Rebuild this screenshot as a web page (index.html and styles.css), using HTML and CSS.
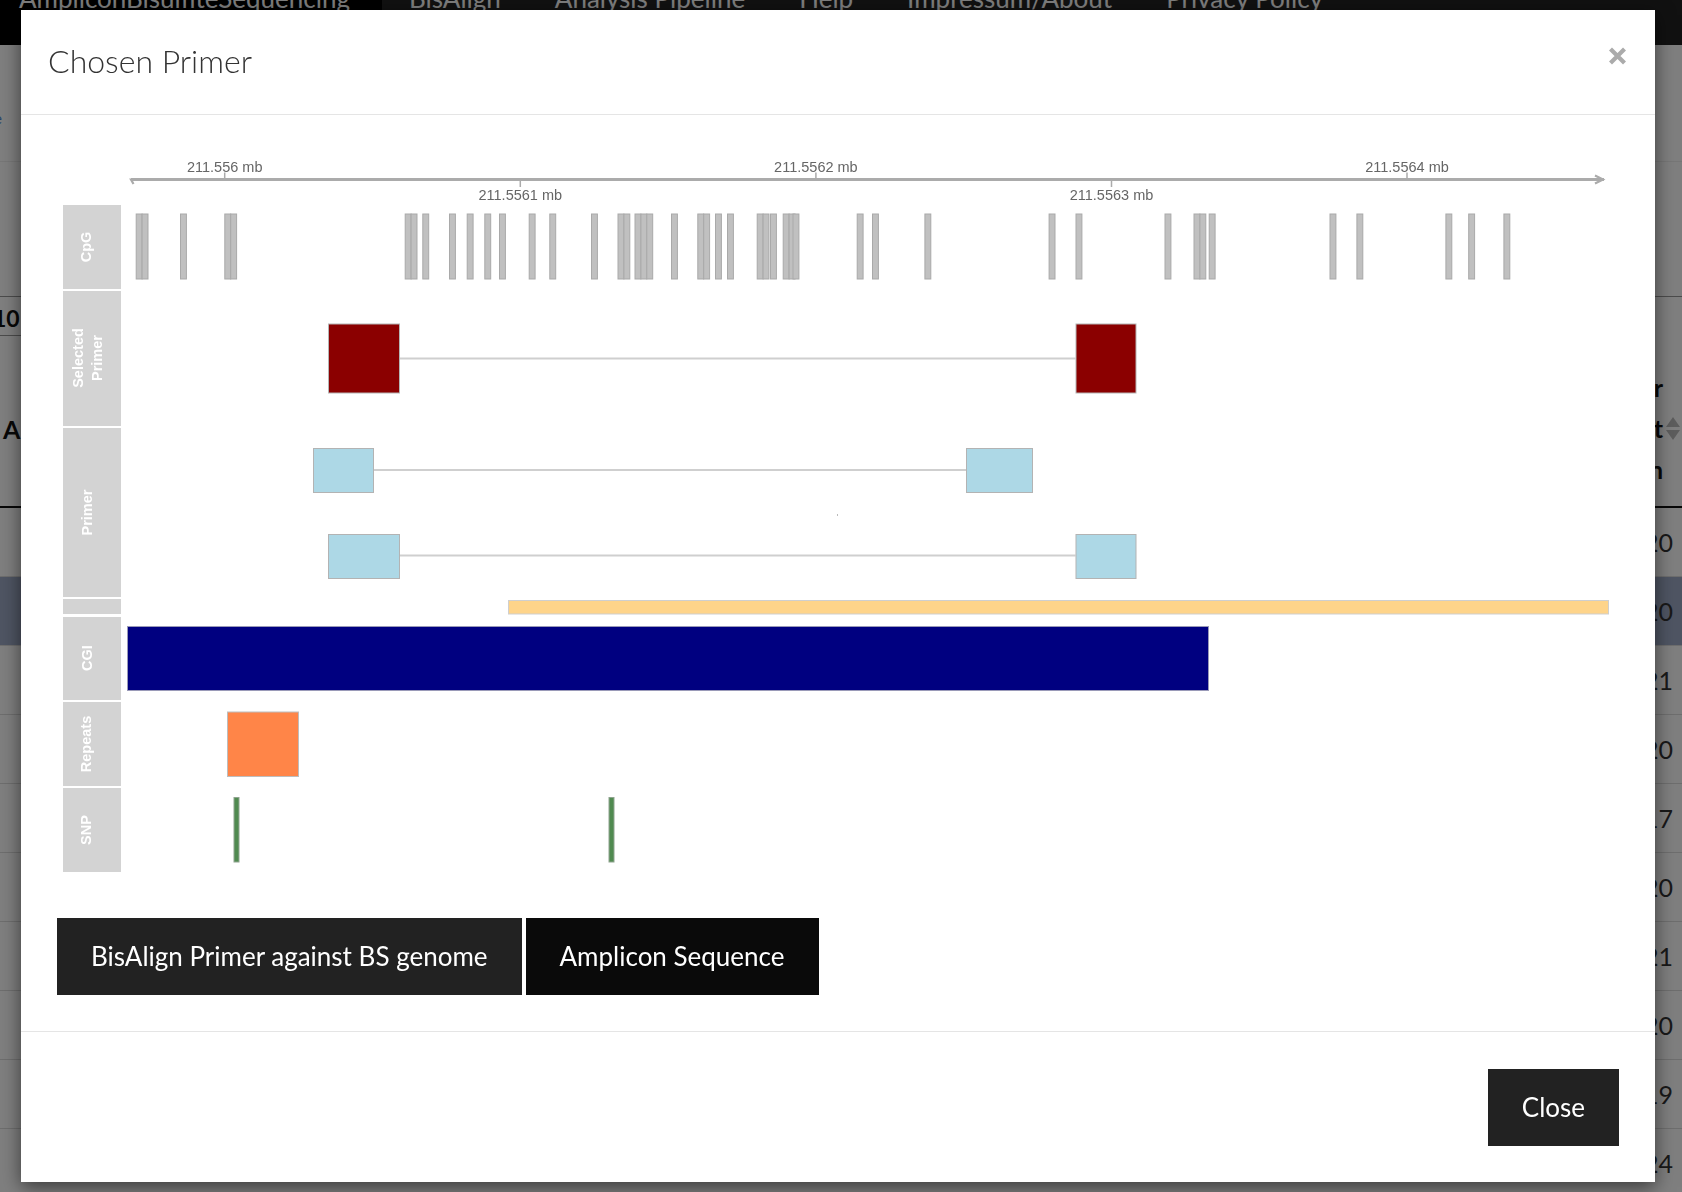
FILE: index.html
```html
<!DOCTYPE html>
<html lang="en">
<head>
<meta charset="utf-8">
<title>Chosen Primer</title>
<link rel="stylesheet" href="styles.css">
</head>
<body>
<div class="page">
  <header class="navbar">
    <div class="brand"><span class="nav-text">AmpliconBisulfiteSequencing</span></div>
    <nav class="nav-links">
      <span class="nav-text nav-item">BisAlign</span>
      <span class="nav-text nav-item">Analysis Pipeline</span>
      <span class="nav-text nav-item">Help</span>
      <span class="nav-text nav-item">Impressum/About</span>
      <span class="nav-text nav-item">Privacy Policy</span>
    </nav>
  </header>
  <main class="content">
    <div class="crumb"><a class="crumb-link">Home</a></div>
    <div class="toolbar"></div>
    <div class="length-row"><span class="length-select">10</span></div>
    <div class="thead">
      <div class="th-left">A</div>
      <div class="th-right">
        <span class="th-line">Primer</span>
        <span class="th-line">Count<span class="sort"><span class="sort-up"></span><span class="sort-down"></span></span></span>
        <span class="th-line">Position</span>
      </div>
    </div>
    <div class="tbody">
      <div class="tr"><span class="td-num">20</span></div>
      <div class="tr tr-active"><span class="td-num">20</span></div>
      <div class="tr"><span class="td-num">21</span></div>
      <div class="tr"><span class="td-num">20</span></div>
      <div class="tr"><span class="td-num">17</span></div>
      <div class="tr"><span class="td-num">20</span></div>
      <div class="tr"><span class="td-num">21</span></div>
      <div class="tr"><span class="td-num">20</span></div>
      <div class="tr"><span class="td-num">19</span></div>
      <div class="tr"><span class="td-num">24</span></div>
    </div>
  </main>
</div>

<div class="backdrop"></div>

<div class="modal">
  <div class="modal-header">
    <h4 class="modal-title">Chosen Primer</h4>
    <svg class="close-x" width="19" height="18" viewBox="0 0 19 18" aria-label="close">
      <path d="M2.5 2 L16.5 16 M16.5 2 L2.5 16" />
    </svg>
  </div>

  <div class="modal-body">
    <svg class="tracks" width="1562" height="790" viewBox="0 0 1562 790">
      <!-- axis -->
      <g class="axis">
        <line class="axis-line" x1="74" y1="64.5" x2="1547" y2="64.5"/>
        <polyline class="axis-end" points="80,64.5 74,64.5 76.5,69"/>
        <polyline class="axis-end" points="1538,60.5 1546,64.5 1538,68.5"/>
        <line class="tick" x1="167.7" y1="57.5" x2="167.7" y2="63"/>
        <line class="tick" x1="463.3" y1="66" x2="463.3" y2="72"/>
        <line class="tick" x1="758.9" y1="57.5" x2="758.9" y2="63"/>
        <line class="tick" x1="1054.5" y1="66" x2="1054.5" y2="72"/>
        <line class="tick" x1="1350" y1="57.5" x2="1350" y2="63"/>
        <text class="axis-label" x="167.7" y="56.5">211.556 mb</text>
        <text class="axis-label" x="463.3" y="85">211.5561 mb</text>
        <text class="axis-label" x="758.9" y="56.5">211.5562 mb</text>
        <text class="axis-label" x="1054.5" y="85">211.5563 mb</text>
        <text class="axis-label" x="1350" y="56.5">211.5564 mb</text>
      </g>

      <!-- track labels -->
      <g class="labels">
        <rect class="label-cell" x="6" y="90" width="58" height="84"/>
        <rect class="label-cell" x="6" y="176" width="58" height="135"/>
        <rect class="label-cell" x="6" y="313" width="58" height="169"/>
        <rect class="label-cell" x="6" y="484" width="58" height="15"/>
        <rect class="label-cell" x="6" y="502" width="58" height="83"/>
        <rect class="label-cell" x="6" y="587" width="58" height="84"/>
        <rect class="label-cell" x="6" y="673" width="58" height="84"/>
        <text class="track-label" transform="translate(34 132) rotate(-90)">CpG</text>
        <text class="track-label" transform="translate(26.3 243) rotate(-90)">Selected</text>
        <text class="track-label" transform="translate(44.7 243) rotate(-90)">Primer</text>
        <text class="track-label" transform="translate(34.5 397.5) rotate(-90)">Primer</text>
        <text class="track-label" transform="translate(34.5 543) rotate(-90)">CGI</text>
        <text class="track-label" transform="translate(34 629) rotate(-90)">Repeats</text>
        <text class="track-label" transform="translate(34 715) rotate(-90)">SNP</text>
      </g>

      <!-- CpG sites -->
      <g class="cpg">
        <rect x="79.2" y="99" width="5.9" height="65"/><rect x="85.1" y="99" width="5.9" height="65"/>
        <rect x="123.5" y="99" width="5.9" height="65"/>
        <rect x="167.8" y="99" width="5.9" height="65"/><rect x="173.7" y="99" width="5.9" height="65"/>
        <rect x="348.2" y="99" width="5.9" height="65"/><rect x="354.1" y="99" width="5.9" height="65"/>
        <rect x="365.8" y="99" width="5.9" height="65"/>
        <rect x="392.5" y="99" width="5.9" height="65"/>
        <rect x="410.2" y="99" width="5.9" height="65"/>
        <rect x="427.8" y="99" width="5.9" height="65"/>
        <rect x="442.5" y="99" width="5.9" height="65"/>
        <rect x="472.2" y="99" width="5.9" height="65"/>
        <rect x="492.8" y="99" width="5.9" height="65"/>
        <rect x="534.5" y="99" width="5.9" height="65"/>
        <rect x="561" y="99" width="5.9" height="65"/><rect x="566.9" y="99" width="5.9" height="65"/>
        <rect x="578" y="99" width="5.9" height="65"/><rect x="583.9" y="99" width="5.9" height="65"/><rect x="589.8" y="99" width="5.9" height="65"/>
        <rect x="614.5" y="99" width="5.9" height="65"/>
        <rect x="640.8" y="99" width="5.9" height="65"/><rect x="646.7" y="99" width="5.9" height="65"/>
        <rect x="658.5" y="99" width="5.9" height="65"/>
        <rect x="670.5" y="99" width="5.9" height="65"/>
        <rect x="700.2" y="99" width="5.9" height="65"/><rect x="706.1" y="99" width="5.9" height="65"/><rect x="713.5" y="99" width="5.9" height="65"/>
        <rect x="726.2" y="99" width="5.9" height="65"/><rect x="732.1" y="99" width="5.9" height="65"/><rect x="736" y="99" width="5.9" height="65"/>
        <rect x="800.2" y="99" width="5.9" height="65"/>
        <rect x="815.5" y="99" width="5.9" height="65"/>
        <rect x="867.9" y="99" width="5.9" height="65"/>
        <rect x="992.1" y="99" width="5.9" height="65"/>
        <rect x="1019" y="99" width="5.9" height="65"/>
        <rect x="1108" y="99" width="5.9" height="65"/>
        <rect x="1137" y="99" width="5.9" height="65"/><rect x="1142.9" y="99" width="5.9" height="65"/><rect x="1152.2" y="99" width="5.9" height="65"/>
        <rect x="1273" y="99" width="5.9" height="65"/>
        <rect x="1299.9" y="99" width="5.9" height="65"/>
        <rect x="1388.9" y="99" width="5.9" height="65"/>
        <rect x="1411.7" y="99" width="5.9" height="65"/>
        <rect x="1446.9" y="99" width="5.9" height="65"/>
      </g>

      <!-- selected primer -->
      <g class="selected-primer">
        <line class="connector" x1="342" y1="243.5" x2="1018.5" y2="243.5"/>
        <rect class="sel-box" x="271.5" y="209" width="71" height="69"/>
        <rect class="sel-box" x="1019" y="209" width="60" height="69"/>
      </g>

      <!-- primers -->
      <g class="primers">
        <line class="connector" x1="316" y1="355" x2="909" y2="355"/>
        <rect class="primer-box" x="256.5" y="333.5" width="60" height="44"/>
        <rect class="primer-box" x="909.5" y="333.5" width="66" height="44"/>
        <line class="connector" x1="342" y1="440.5" x2="1018.5" y2="440.5"/>
        <rect class="primer-box" x="271.5" y="419.5" width="71" height="44"/>
        <rect class="primer-box" x="1019" y="419.5" width="60" height="44"/>
        <rect class="dot" x="780" y="399" width="1" height="2"/>
      </g>

      <!-- amplicon -->
      <rect class="amplicon" x="451.5" y="485.5" width="1100" height="13.5"/>

      <!-- CGI -->
      <rect class="cgi" x="70.5" y="511.5" width="1081" height="64"/>

      <!-- repeats -->
      <rect class="repeat" x="170.5" y="597" width="71" height="64.5"/>

      <!-- SNPs -->
      <rect class="snp" x="177" y="682.5" width="5" height="64.5"/>
      <rect class="snp" x="552" y="682.5" width="5" height="64.5"/>
    </svg>

    <div class="actions">
      <button class="btn btn-dark" type="button">BisAlign Primer against BS genome</button>
      <button class="btn btn-black" type="button">Amplicon Sequence</button>
    </div>
  </div>

  <div class="modal-footer">
    <button class="btn btn-dark" type="button">Close</button>
  </div>
</div>
</body>
</html>
```
FILE: styles.css
```css
html, body {
  margin: 0;
  padding: 0;
}

body {
  width: 1682px;
  height: 1192px;
  overflow: hidden;
  font-family: "Lato", "Noto Sans", sans-serif;
  background: #fff;
  color: #333;
}

/* ---------- background page ---------- */
.page {
  height: 1192px;
  overflow: hidden;
  background: #fff;
}

.navbar {
  display: flex;
  height: 45px;
  background: #222;
  overflow: hidden;
}

.brand {
  width: 382px;
  flex: none;
  background: #000;
  padding-left: 19px;
  box-sizing: border-box;
}

.nav-links {
  display: flex;
  align-items: flex-start;
  margin-left: 0;
}

.nav-text {
  display: block;
  font-size: 26px;
  line-height: 26px;
  color: #fff;
  margin-top: -15px;
  white-space: nowrap;
}

.nav-item {
  padding: 0 27px;
}

.content {
  display: flex;
  flex-direction: column;
}

.crumb {
  height: 117px;
  box-sizing: border-box;
  border-bottom: 1px solid #eee;
  padding-top: 63px;
}

.crumb-link {
  display: block;
  margin-left: -38px;
  font-size: 15px;
  line-height: 20px;
  color: #4a86d0;
}

.toolbar {
  height: 135px;
  box-sizing: border-box;
  border-bottom: 1px solid #999;
}

.length-row {
  height: 39px;
  box-sizing: border-box;
}

.length-select {
  display: block;
  width: 40px;
  height: 39px;
  box-sizing: border-box;
  margin-left: -12px;
  padding-left: 5px;
  padding-top: 3px;
  border-bottom: 1px solid #999;
  font-weight: 700;
  font-size: 23px;
  line-height: 36px;
  color: #111;
}

.thead {
  height: 172px;
  box-sizing: border-box;
  border-bottom: 2px solid #111;
  display: flex;
  justify-content: space-between;
}

.th-left {
  align-self: flex-start;
  margin-top: 78px;
  padding-left: 3px;
  font-weight: 700;
  font-size: 25px;
  line-height: 30px;
  color: #111;
}

.th-right {
  display: flex;
  flex-direction: column;
  align-items: flex-end;
  padding-top: 31px;
  padding-right: 2px;
}

.th-line {
  display: flex;
  align-items: center;
  font-weight: 700;
  font-size: 25px;
  line-height: 41px;
  color: #111;
  padding-right: 17px;
}

.th-line:nth-child(2) {
  padding-right: 0;
}

.sort {
  display: inline-flex;
  flex-direction: column;
  gap: 3px;
  margin-left: 3px;
}

.sort-up,
.sort-down {
  width: 0;
  height: 0;
  border-left: 7px solid transparent;
  border-right: 7px solid transparent;
}

.sort-up { border-bottom: 10px solid #bbb; }
.sort-down { border-top: 10px solid #bbb; }

.tbody {
  display: flex;
  flex-direction: column;
}

.tr {
  height: 69px;
  box-sizing: border-box;
  border-bottom: 1px solid #ddd;
  display: flex;
  justify-content: flex-end;
  align-items: center;
  padding-right: 9px;
}

.tr-active {
  background: #9eaac6;
}

.td-num {
  font-size: 25px;
  color: #333;
}

/* ---------- modal ---------- */
.backdrop {
  position: fixed;
  inset: 0;
  background: rgba(0, 0, 0, 0.5);
}

.modal {
  position: absolute;
  left: 21px;
  top: 10px;
  width: 1634px;
  height: 1172px;
  box-sizing: border-box;
  background: #fff;
  box-shadow: 0 5px 18px rgba(0, 0, 0, 0.55);
  display: flex;
  flex-direction: column;
}

.modal-header {
  display: flex;
  justify-content: space-between;
  align-items: flex-start;
  height: 105px;
  box-sizing: border-box;
  padding: 0 28px 0 27px;
  border-bottom: 1px solid #e5e5e5;
}

.modal-title {
  margin: 32px 0 0 0;
  font-weight: 300;
  font-size: 32px;
  line-height: 38px;
  color: #333;
}

.close-x {
  display: block;
  margin-top: 37px;
}

.close-x path {
  stroke: #ababab;
  stroke-width: 4.2;
  fill: none;
}

.modal-body {
  padding: 0 36px 36px;
}

.tracks {
  display: block;
}

.axis-line {
  stroke: #ababab;
  stroke-width: 3;
}

.axis-end {
  stroke: #ababab;
  stroke-width: 2.2;
  fill: none;
}

.tick {
  stroke: #ababab;
  stroke-width: 1.5;
}

.axis-label {
  font-family: "Liberation Sans", Arial, sans-serif;
  font-size: 14.5px;
  fill: #666;
  text-anchor: middle;
}

.label-cell {
  fill: #d3d3d3;
}

.track-label {
  font-family: "Liberation Sans", Arial, sans-serif;
  font-weight: 700;
  font-size: 14.5px;
  fill: #fff;
  text-anchor: middle;
}

.cpg rect {
  fill: #c0c0c0;
  stroke: #a9a9a9;
  stroke-width: 1;
}

.connector {
  stroke: #cfcfcf;
  stroke-width: 2;
}

.sel-box {
  fill: #8b0000;
  stroke: #b5b5b5;
  stroke-width: 1;
}

.primer-box {
  fill: #add8e6;
  stroke: #b3b3b3;
  stroke-width: 1;
}

.dot {
  fill: #bbb;
}

.amplicon {
  fill: #fed48a;
  stroke: #cfcfcf;
  stroke-width: 1;
}

.cgi {
  fill: #000080;
  stroke: #9a9ab8;
  stroke-width: 1;
}

.repeat {
  fill: #ff8548;
  stroke: #bdbdbd;
  stroke-width: 1;
}

.snp {
  fill: #508a50;
  stroke: #8fa48f;
  stroke-width: 1;
}

.actions {
  display: flex;
  gap: 4px;
  margin-top: 13px;
}

.btn {
  height: 77px;
  padding: 0 34px;
  border: 0;
  border-radius: 0;
  font-family: "Lato", "Noto Sans", sans-serif;
  font-size: 26px;
  line-height: 31px;
  color: #fff;
  cursor: pointer;
  white-space: nowrap;
}

.btn-dark {
  background: #222;
}

.btn-black {
  background: #0a0a0a;
}

.modal-footer {
  display: flex;
  justify-content: flex-end;
  padding: 37px 36px 36px;
  border-top: 1px solid #e5e5e5;
}
```
